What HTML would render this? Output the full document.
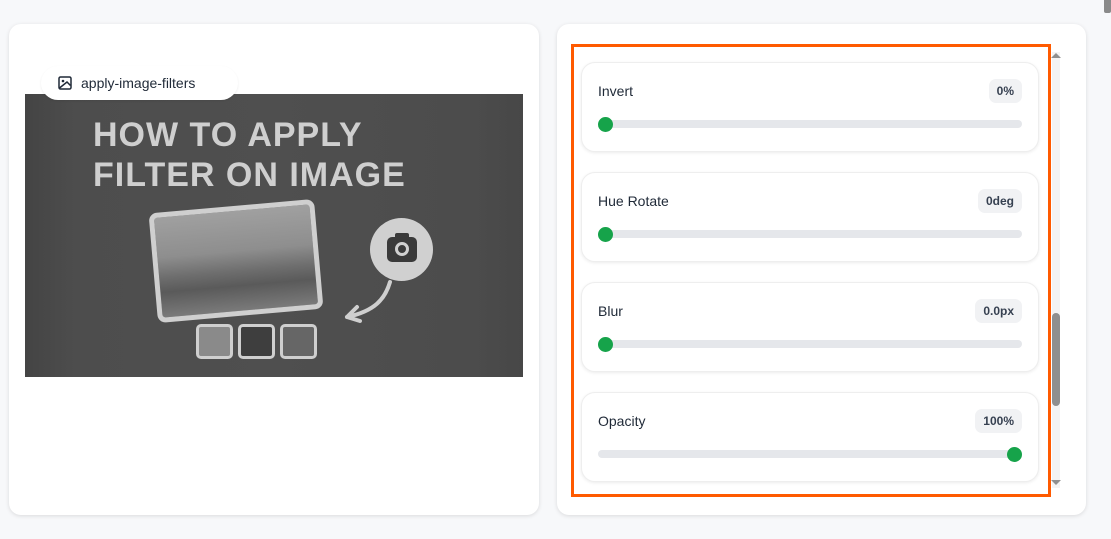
<!DOCTYPE html>
<html><head><style>
*{box-sizing:border-box;margin:0;padding:0}
body{width:1111px;height:539px;background:#f7f8fa;font-family:"Liberation Sans",sans-serif;position:relative;overflow:hidden}
.card{position:absolute;background:#fff;border-radius:12px;box-shadow:0 1px 4px rgba(0,0,0,.12)}
.img{position:absolute;left:25px;top:94px;width:498px;height:283px;background:linear-gradient(90deg,#444 0,#4d4d4d 10%,#4f4f4f 50%,#4c4c4c 90%,#474747 100%);overflow:hidden}
.chip{position:absolute;left:41px;top:66px;width:197px;height:34px;background:#fff;border-radius:17px;font-size:14px;color:#1f2937;padding:9px 0 0 40px;box-shadow:0 1px 2px rgba(0,0,0,.08)}
.title{position:absolute;left:68px;font-weight:bold;font-size:34px;color:#cfcfcf;letter-spacing:1px}
.f{position:absolute;left:581px;width:458px;height:90px;background:#fff;border:1px solid #eee;border-radius:14px;box-shadow:0 1px 3px rgba(0,0,0,.08)}
.f .l{position:absolute;left:16px;top:20px;font-size:14px;color:#1f2937}
.f .b{position:absolute;right:16px;top:16px;height:24px;padding:0 8px;background:#f1f2f4;border-radius:7px;font-size:12px;font-weight:bold;color:#374151;line-height:24px}
.f .t{position:absolute;left:16px;right:16px;top:57px;height:8px;background:#e5e7eb;border-radius:4px}
.f .k{position:absolute;top:54px;width:15px;height:15px;border-radius:50%;background:#16a34a}
</style></head><body>
<div style="position:absolute;left:1104px;top:0;width:7px;height:13px;background:#8a8a8a;border-radius:0 0 2px 2px"></div>
<div class="card" style="left:9px;top:24px;width:530px;height:491px"></div>
<div class="card" style="left:557px;top:24px;width:529px;height:491px"></div>
<div class="img">
<div class="title" style="top:22px">HOW TO APPLY</div>
<div class="title" style="top:62px">FILTER ON IMAGE</div>
<div style="position:absolute;left:128px;top:112px;width:166px;height:110px;border:5px solid #cfcfcf;border-radius:8px;transform:rotate(-5deg);background:linear-gradient(180deg,#a0a0a0 0,#8e8e8e 40%,#6e6e6e 60%,#5a5a5a 75%,#7a7a7a 100%)"></div>
<div style="position:absolute;left:345px;top:124px;width:63px;height:63px;border-radius:50%;background:#d0d0d0"></div>
<div style="position:absolute;left:362px;top:143px;width:30px;height:25px;border-radius:5px;background:#3a3a3a"></div>
<div style="position:absolute;left:370px;top:139px;width:14px;height:6px;border-radius:2px;background:#3a3a3a"></div>
<div style="position:absolute;left:370px;top:148px;width:14px;height:14px;border-radius:50%;border:3px solid #d0d0d0"></div>
<svg style="position:absolute;left:315px;top:185px" width="60" height="45"><path d="M50 3 C45 20 35 32 7 38 M7 38 L17 28 M7 38 L20 42" stroke="#cfcfcf" stroke-width="4" fill="none" stroke-linecap="round"/></svg>
<div style="position:absolute;left:171px;top:230px;width:37px;height:35px;border:3px solid #cfcfcf;border-radius:5px;background:#8a8a8a"></div>
<div style="position:absolute;left:213px;top:230px;width:37px;height:35px;border:3px solid #cfcfcf;border-radius:5px;background:#3e3e3e"></div>
<div style="position:absolute;left:255px;top:230px;width:37px;height:35px;border:3px solid #cfcfcf;border-radius:5px;background:#666"></div>
</div>
<div class="chip"><svg style="position:absolute;left:17px;top:10px" width="14" height="14" viewBox="0 0 14 14"><rect x="1" y="1" width="12" height="12" rx="1.5" fill="none" stroke="#1f2937" stroke-width="1.5"/><circle cx="5" cy="5" r="1.3" fill="#1f2937"/><path d="M1.5 12 L9 6 L12.5 9.5" fill="none" stroke="#1f2937" stroke-width="1.5"/></svg>apply-image-filters</div>

<div style="position:absolute;left:571px;top:44px;width:480px;height:453px;border:3px solid #ff5a00"></div>
<div style="position:absolute;left:1052px;top:52px;width:8px;height:436px;background:#f3f3f3"></div>
<div style="position:absolute;left:1052px;top:313px;width:8px;height:93px;background:#8f8f8f;border-radius:4px"></div>
<div style="position:absolute;left:1051px;top:53px;border:5px solid transparent;border-bottom-color:#8f8f8f;border-top:0"></div>
<div style="position:absolute;left:1051px;top:480px;border:5px solid transparent;border-top-color:#8f8f8f;border-bottom:0"></div>

<div class="f" style="top:62px"><div class="l">Invert</div><div class="b">0%</div><div class="t"></div><div class="k" style="left:16px"></div></div>
<div class="f" style="top:172px"><div class="l">Hue Rotate</div><div class="b">0deg</div><div class="t"></div><div class="k" style="left:16px"></div></div>
<div class="f" style="top:282px"><div class="l">Blur</div><div class="b">0.0px</div><div class="t"></div><div class="k" style="left:16px"></div></div>
<div class="f" style="top:392px"><div class="l">Opacity</div><div class="b">100%</div><div class="t"></div><div class="k" style="left:425px"></div></div>
</body></html>
